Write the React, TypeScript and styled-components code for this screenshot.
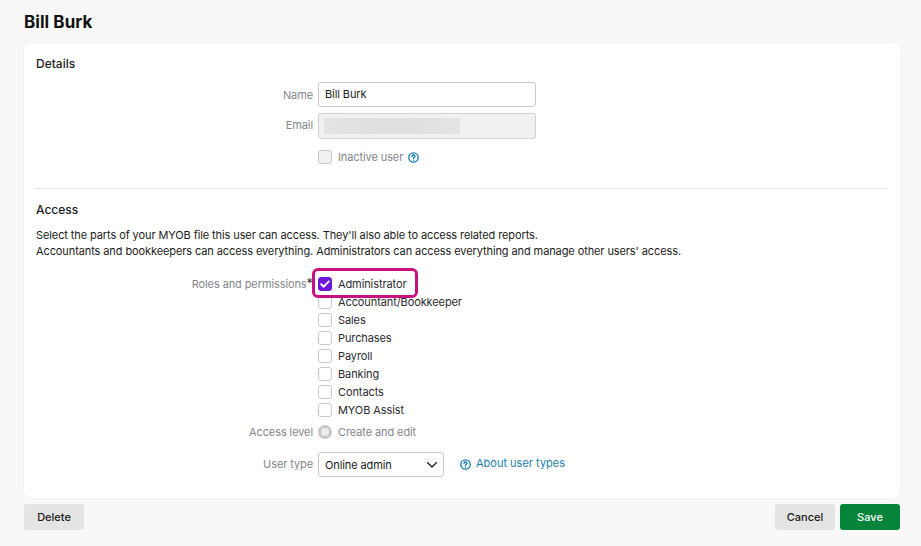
import React, { FC } from 'react';
import styled, { createGlobalStyle } from 'styled-components';

const GlobalStyle = createGlobalStyle`
  html, body {
    margin: 0;
    padding: 0;
    background: #f8f8f8;
    font-family: Inter, "Liberation Sans", sans-serif;
    font-size: 11px;
    letter-spacing: -0.1px;
    color: #1b1b20;
  }
`;

const Page = styled.div`
  width: 921px;
  height: 546px;
  box-sizing: border-box;
  padding: 12px 21px 0 24px;
  overflow: hidden;
`;

const Title = styled.h1`
  margin: 0 0 11px;
  font-size: 17px;
  line-height: 20px;
  font-weight: 700;
  letter-spacing: 0.05px;
  color: #111;
`;

const Card = styled.main`
  height: 455px;
  box-sizing: border-box;
  padding: 13px 12px 0;
  background: #fff;
  border-radius: 6px;
  box-shadow: 0 0 2px rgba(0, 0, 0, 0.08);
`;

const Heading = styled.h2`
  margin: 0;
  font-size: 12px;
  line-height: 16px;
  font-weight: 500;
  letter-spacing: 0;
`;

const Divider = styled.hr`
  margin: 22px 0 13px;
  border: 0;
  border-top: 1px solid #e2e2e4;
`;

const Intro = styled.p`
  margin: 9px 0 16px;
  font-size: 11px;
  line-height: 16px;
`;

const Row = styled.div<{ $top?: number; $alignTop?: boolean }>`
  display: grid;
  grid-template-columns: 277px 1fr;
  column-gap: 5px;
  align-items: ${(p) => (p.$alignTop ? 'start' : 'center')};
  margin-top: ${(p) => p.$top ?? 0}px;
`;

const Label = styled.span<{ $raised?: boolean }>`
  text-align: right;
  line-height: 18px;
  color: #83868c;
  padding-bottom: ${(p) => (p.$raised ? 2 : 0)}px;
`;

const Required = styled.span`
  font-size: 13px;
  line-height: 0;
  color: #333;
`;

const TextField = styled.div<{ $disabled?: boolean }>`
  width: 218px;
  height: ${(p) => (p.$disabled ? 26 : 25)}px;
  box-sizing: border-box;
  padding: 0 5px 1px 6px;
  display: flex;
  align-items: center;
  border: 1px solid ${(p) => (p.$disabled ? '#d0d1d3' : '#c6c8cc')};
  border-radius: 3px;
  background: ${(p) => (p.$disabled ? '#f1f1f1' : '#fff')};
`;

const BlurredValue = styled.div`
  width: 136px;
  height: 16px;
  margin: 1px 0 0 -1px;
  background: linear-gradient(90deg, #e3e3e3, #dedede 55%, #e4e4e4);
`;

const CheckRow = styled.label<{ $muted?: boolean }>`
  height: 18px;
  display: flex;
  align-items: center;
  gap: 6px;
  color: ${(p) => (p.$muted ? '#83868c' : '#2a2a30')};
`;

const Box = styled.span<{ $checked?: boolean; $disabled?: boolean }>`
  width: 14px;
  height: 14px;
  flex: none;
  display: flex;
  align-items: center;
  justify-content: center;
  box-sizing: border-box;
  border-radius: 3px;
  border: 1px solid ${(p) => (p.$checked ? '#6d17d9' : '#c6c8cc')};
  background: ${(p) => (p.$checked ? '#6d17d9' : p.$disabled ? '#f1f1f1' : '#fff')};
`;

const RoleList = styled.div`
  position: relative;
  display: flex;
  flex-direction: column;
`;

const Highlight = styled.div`
  position: absolute;
  left: -6px;
  top: -7px;
  width: 106px;
  height: 30px;
  box-sizing: border-box;
  border: 3px solid #c8107e;
  border-radius: 6px;
`;

const Radio = styled.span`
  width: 14px;
  height: 14px;
  flex: none;
  box-sizing: border-box;
  border-radius: 50%;
  border: 3px solid #c9c9c9;
  background: #ececec;
`;

const SelectRow = styled.div`
  display: flex;
  align-items: center;
  gap: 16px;
`;

const Select = styled.div`
  width: 126px;
  height: 25px;
  box-sizing: border-box;
  padding: 0 5px 0 6px;
  display: flex;
  align-items: center;
  justify-content: space-between;
  border: 1px solid #c6c8cc;
  border-radius: 3px;
  background: #fff;
`;

const HelpLink = styled.a`
  display: flex;
  align-items: center;
  gap: 5px;
  color: #1a7fb0;
`;

const HelpLinkText = styled.span`
  margin-bottom: 4px;
  letter-spacing: 0;
`;

const InlineHelp = styled.span`
  display: flex;
  margin-left: -1px;
`;

const Actions = styled.footer`
  margin-top: 6px;
  display: flex;
  gap: 5px;
`;

const Button = styled.button<{ $primary?: boolean; $push?: boolean }>`
  width: 60px;
  height: 26px;
  padding: 0;
  border: 0;
  border-radius: 3px;
  margin-left: ${(p) => (p.$push ? 'auto' : '0')};
  background: ${(p) => (p.$primary ? '#07843b' : '#e4e4e4')};
  color: ${(p) => (p.$primary ? '#fff' : '#1b1b20')};
  font: 500 11px Inter, "Liberation Sans", sans-serif;
`;

const HelpIcon: FC = () => (
  <svg width="11" height="11" viewBox="0 0 12 12" fill="none" stroke="#1a7fb0" strokeWidth="1.5">
    <circle cx="6" cy="6" r="5.1" />
    <path d="M4.4 4.8c0-1 .8-1.5 1.6-1.5s1.6.5 1.6 1.4c0 1.1-1.6 1.1-1.6 2.2" strokeLinecap="round" />
    <circle cx="6" cy="8.8" r=".4" fill="#1a7fb0" strokeWidth="1" />
  </svg>
);

const Tick: FC = () => (
  <svg width="10" height="8" viewBox="0 0 10 8" fill="none" stroke="#fff" strokeWidth="1.9" strokeLinecap="round" strokeLinejoin="round">
    <path d="M1.2 4.2 3.8 6.7 8.8 1.4" />
  </svg>
);

const Chevron: FC = () => (
  <svg width="12" height="8" viewBox="0 0 12 8" fill="none" stroke="#2a2a30" strokeWidth="1.5" strokeLinecap="round" strokeLinejoin="round">
    <path d="M1.7 1.7 6 6l4.3-4.3" />
  </svg>
);

const roles = ['Accountant/Bookkeeper', 'Sales', 'Purchases', 'Payroll', 'Banking', 'Contacts', 'MYOB Assist'];

const App: FC = () => (
  <Page>
    <GlobalStyle />
    <Title>Bill Burk</Title>
    <Card>
      <Heading>Details</Heading>
      <Row $top={10}>
        <Label>Name</Label>
        <TextField>Bill Burk</TextField>
      </Row>
      <Row $top={6}>
        <Label $raised>Email</Label>
        <TextField $disabled>
          <BlurredValue />
        </TextField>
      </Row>
      <Row $top={9}>
        <span />
        <CheckRow $muted>
          <Box $disabled />
          Inactive user
          <InlineHelp>
            <HelpIcon />
          </InlineHelp>
        </CheckRow>
      </Row>
      <Divider />
      <Heading>Access</Heading>
      <Intro>
        Select the parts of your MYOB file this user can access. They'll also able to access related reports.
        <br />
        Accountants and bookkeepers can access everything. Administrators can access everything and manage other users' access.
      </Intro>
      <Row $alignTop>
        <Label>
          Roles and permissions<Required>*</Required>
        </Label>
        <RoleList>
          <Highlight />
          <CheckRow>
            <Box $checked>
              <Tick />
            </Box>
            Administrator
          </CheckRow>
          {roles.map((role) => (
            <CheckRow key={role}>
              <Box />
              {role}
            </CheckRow>
          ))}
        </RoleList>
      </Row>
      <Row $top={4}>
        <Label>Access level</Label>
        <CheckRow $muted>
          <Radio />
          Create and edit
        </CheckRow>
      </Row>
      <Row $top={11}>
        <Label $raised>User type</Label>
        <SelectRow>
          <Select>
            Online admin
            <Chevron />
          </Select>
          <HelpLink>
            <HelpIcon />
            <HelpLinkText>About user types</HelpLinkText>
          </HelpLink>
        </SelectRow>
      </Row>
    </Card>
    <Actions>
      <Button>Delete</Button>
      <Button $push>Cancel</Button>
      <Button $primary>Save</Button>
    </Actions>
  </Page>
);

export default App;
